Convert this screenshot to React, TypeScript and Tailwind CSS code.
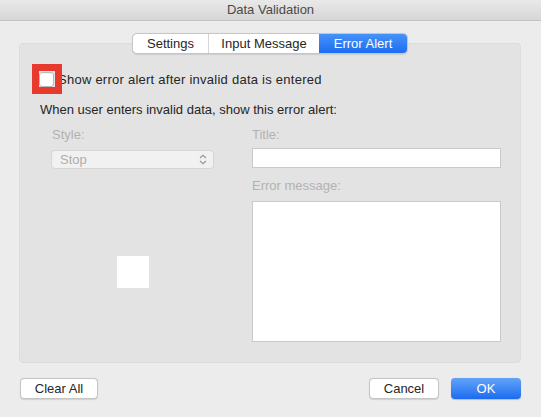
import React from "react";

const tabs = ["Settings", "Input Message", "Error Alert"];

function Chevrons() {
  return (
    <svg width="8" height="11" viewBox="0 0 8 11" fill="none">
      <path d="M1 4 L4 1.2 L7 4" stroke="#9a9a9a" strokeWidth="1.2" />
      <path d="M1 7 L4 9.8 L7 7" stroke="#9a9a9a" strokeWidth="1.2" />
    </svg>
  );
}

export default function App() {
  return (
    <div
      className="w-[541px] h-[417px] bg-[#ececec] text-[13px] text-[#262626] overflow-hidden"
      style={{ fontFamily: '"Liberation Sans", Arial, sans-serif' }}
    >
      {/* title bar */}
      <div className="h-[21px] flex items-center justify-center bg-gradient-to-b from-[#e9e9e9] to-[#d6d6d6] border-b border-[#c3c3c3] text-[#4a4a4a]">
        Data Validation
      </div>

      <div className="pl-[19px] pr-[20px]">
        {/* tabs */}
        <div className="relative z-10 mt-[12px] flex justify-center">
          <div className="flex h-[21px] rounded-[5px] border border-[#c6c6c6] bg-white overflow-hidden shadow-[0_0.5px_1px_rgba(0,0,0,0.1)]">
            {tabs.map((tab, index) => (
              <div
                key={tab}
                className={`flex items-center justify-center leading-none ${
                  index === 0 ? "w-[75px]" : index === 1 ? "w-[111px] border-l border-[#d6d6d6]" : "w-[88px]"
                } ${
                  index === 2
                    ? "bg-gradient-to-b from-[#4692f8] to-[#1c6cf0] text-white"
                    : "text-[#262626]"
                }`}
              >
                {tab}
              </div>
            ))}
          </div>
        </div>

        {/* panel */}
        <div className="-mt-[11px] h-[320px] rounded-[4px] bg-[#e3e3e3] border border-[#dcdcdc] pt-[28px] pl-[19px] pr-[19px]">
          <label className="flex items-center gap-[4px] h-[15px]">
            <span className="relative w-[15px] h-[15px] shrink-0">
              <span className="absolute -left-[7px] -top-[8px] w-[30px] h-[30px] border-[7px] border-[#e8392f]" />
              <span className="absolute inset-0 rounded-[3px] border border-[#b9b9b9] bg-white shadow-[inset_0_1px_1px_rgba(0,0,0,0.06)]" />
            </span>
            <span className="leading-[16px] tracking-[0.25px]">Show error alert after invalid data is entered</span>
          </label>

          <p className="mt-[15px] ml-[1px] leading-[16px]">
            When user enters invalid data, show this error alert:
          </p>

          <div className="flex mt-[9px]">
            <div className="ml-[12px] w-[163px] flex flex-col">
              <span className="pl-[1px] leading-[16px] text-[#b2b2b2]">Style:</span>
              <div className="mt-[7px] h-[19px] rounded-[4px] border border-[#d5d5d5] bg-[#f1f1f1] flex items-center justify-between pl-[8px] pr-[6px] text-[#aeaeae]">
                <span>Stop</span>
                <Chevrons />
              </div>
              <div className="mt-[87px] mx-auto w-[32px] h-[32px] bg-white" />
            </div>

            <div className="ml-[38px] w-[249px] flex flex-col">
              <span className="leading-[16px] text-[#b2b2b2]">Title:</span>
              <div className="mt-[5px] h-[20px] bg-white border border-[#c9c9c9]" />
              <span className="mt-[10px] leading-[16px] text-[#b2b2b2]">Error message:</span>
              <div className="mt-[7px] h-[141px] bg-white border border-[#c9c9c9]" />
            </div>
          </div>
        </div>

        {/* buttons */}
        <div className="mt-[15px] flex items-center pl-[1px]">
          <button className="w-[78px] h-[21px] rounded-[4px] border border-[#c4c4c4] bg-white shadow-[0_0.5px_1px_rgba(0,0,0,0.12)] leading-none">
            Clear All
          </button>
          <div className="flex-1" />
          <button className="w-[70px] h-[21px] rounded-[4px] border border-[#c4c4c4] bg-white shadow-[0_0.5px_1px_rgba(0,0,0,0.12)] leading-none">
            Cancel
          </button>
          <button className="ml-[12px] w-[70px] h-[21px] rounded-[4px] bg-gradient-to-b from-[#62a3f8] to-[#1b6bf0] text-white leading-none shadow-[0_0.5px_1px_rgba(0,0,0,0.2)]">
            OK
          </button>
        </div>
      </div>
    </div>
  );
}
